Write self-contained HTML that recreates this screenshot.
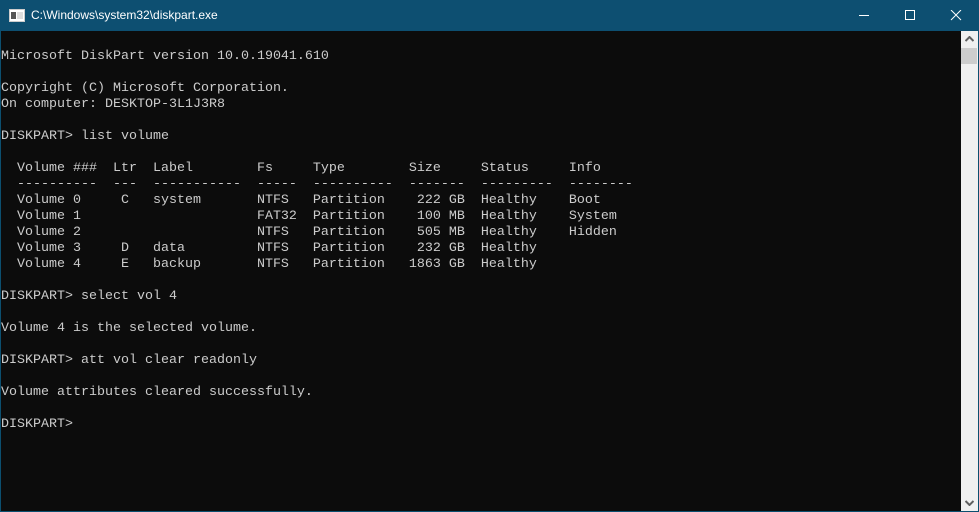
<!DOCTYPE html>
<html><head><style>
body{margin:0;width:979px;height:512px;overflow:hidden;background:#0c4f6f;position:relative;font-family:"Liberation Sans",sans-serif}
#title{position:absolute;left:0;top:0;width:979px;height:31px;background:#0d4f71;color:#fff;font-size:12px}
#title .t{position:absolute;left:31px;top:8px}
#con{position:absolute;left:1px;top:31px;width:960px;height:480px;background:#0c0c0c;overflow:hidden}
pre{margin:0;padding:0;position:absolute;left:0;top:2px;font-family:"Liberation Mono",monospace;font-size:13.33px;line-height:16px;color:#cccccc}
#sb{position:absolute;left:961px;top:31px;width:17px;height:480px;background:#f0f0f0}
#thumb{position:absolute;left:0;top:17px;width:16px;height:16px;background:#cdcdcd}
</style></head><body>
<div id="title">
<svg style="position:absolute;left:9px;top:9px" width="16" height="13"><rect x="0.5" y="0.5" width="15" height="12" fill="#fff" stroke="#ccc"/><rect x="2" y="3" width="5" height="7" fill="#555"/><rect x="8" y="3" width="6" height="7" fill="#ddd"/></svg>
<span class="t">C:\Windows\system32\diskpart.exe</span>
<svg style="position:absolute;left:855px;top:10px" width="120" height="12"><line x1="4" y1="5.5" x2="14" y2="5.5" stroke="#fff"/><rect x="50.5" y="0.5" width="9" height="9" fill="none" stroke="#fff"/><path d="M96 0L106 10M106 0L96 10" stroke="#fff"/></svg>
</div>
<div id="con"><pre>

Microsoft DiskPart version 10.0.19041.610

Copyright (C) Microsoft Corporation.
On computer: DESKTOP-3L1J3R8

DISKPART&gt; list volume

  Volume ###  Ltr  Label        Fs     Type        Size     Status     Info
  ----------  ---  -----------  -----  ----------  -------  ---------  --------
  Volume 0     C   system       NTFS   Partition    222 GB  Healthy    Boot
  Volume 1                      FAT32  Partition    100 MB  Healthy    System
  Volume 2                      NTFS   Partition    505 MB  Healthy    Hidden
  Volume 3     D   data         NTFS   Partition    232 GB  Healthy
  Volume 4     E   backup       NTFS   Partition   1863 GB  Healthy

DISKPART&gt; select vol 4

Volume 4 is the selected volume.

DISKPART&gt; att vol clear readonly

Volume attributes cleared successfully.

DISKPART&gt;
</pre></div>
<div id="sb"><div id="thumb"></div>
<svg style="position:absolute;left:4px;top:5px" width="9" height="6"><path d="M0.5 5L4.5 1L8.5 5" stroke="#606060" stroke-width="2" fill="none"/></svg>
<svg style="position:absolute;left:4px;top:469px" width="9" height="6"><path d="M0.5 1L4.5 5L8.5 1" stroke="#606060" stroke-width="2" fill="none"/></svg>
</div>
</body></html>
